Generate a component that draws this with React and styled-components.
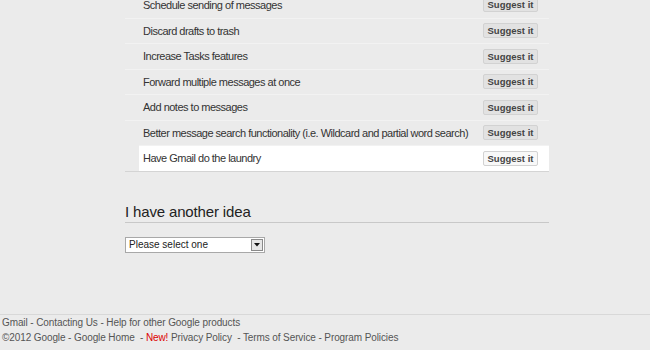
import React from "react";
import styled, { createGlobalStyle } from "styled-components";

const Global = createGlobalStyle`
  html, body { margin: 0; padding: 0; background: #ebebeb; }
  body { font-family: "Liberation Sans", Arial, sans-serif; overflow: hidden; }
`;

const Page = styled.div`
  width: 650px;
  height: 350px;
  display: flex;
  flex-direction: column;
  overflow: hidden;
`;

const Main = styled.div`
  flex: 1;
  padding-left: 125px;
  width: 424px;
`;

const List = styled.div`
  margin-top: -8px;
  border-bottom: 1px solid #d4d4d4;
`;

const Row = styled.div`
  box-sizing: border-box;
  height: 25.5px;
  display: flex;
  align-items: center;
  justify-content: space-between;
  margin-left: ${(p) => (p.$active ? "14px" : "0")};
  padding-left: ${(p) => (p.$active ? "4px" : "18px")};
  padding-right: 11px;
  background: ${(p) => (p.$active ? "#ffffff" : "transparent")};
  border-top: ${(p) => (p.$first ? "none" : "1px solid #f2f2f2")};
`;

const Label = styled.span`
  font-size: 11px;
  letter-spacing: -0.5px;
  color: #333;
  white-space: nowrap;
`;

const Button = styled.button`
  box-sizing: border-box;
  flex-shrink: 0;
  width: 55px;
  height: 15px;
  padding: 0;
  border: 1px solid #d2d2d2;
  border-radius: 2px;
  background: ${(p) => (p.$active ? "#f8f8f8" : "#e2e2e2")};
  font-family: "Liberation Sans", Arial, sans-serif;
  font-size: 9.5px;
  font-weight: bold;
  color: #444;
  line-height: 13px;
  white-space: nowrap;
`;

const Heading = styled.h2`
  margin: 31px 0 0;
  font-size: 15px;
  letter-spacing: -0.15px;
  font-weight: normal;
  color: #222;
  line-height: 18px;
  padding-bottom: 1px;
  border-bottom: 1px solid #c8c8c8;
`;

const Select = styled.div`
  margin-top: 14px;
  box-sizing: border-box;
  width: 140px;
  height: 16px;
  display: flex;
  align-items: center;
  justify-content: space-between;
  border: 1px solid #a8a8a8;
  background: #fff;
  font-size: 10px;
  color: #222;
  padding-left: 3px;
`;

const Arrow = styled.span`
  box-sizing: border-box;
  width: 12px;
  height: 12px;
  margin-right: 1px;
  background: #e6e6e6;
  border: 1px solid #8a8a8a;
  display: flex;
  align-items: center;
  justify-content: center;
`;

const Footer = styled.footer`
  border-top: 1px solid #d8d8d8;
  padding: 0 0 5px 2px;
  font-size: 10px;
  letter-spacing: -0.1px;
  color: #555;
  line-height: 15px;
`;

const FooterLine = styled.div`
  white-space: nowrap;
`;

const New = styled.span`
  color: #dd0000;
`;

const items = [
  "Schedule sending of messages",
  "Discard drafts to trash",
  "Increase Tasks features",
  "Forward multiple messages at once",
  "Add notes to messages",
  "Better message search functionality (i.e. Wildcard and partial word search)",
  "Have Gmail do the laundry",
];

export default function App() {
  return (
    <Page>
      <Global />
      <Main>
        <List>
          {items.map((t, i) => {
            const active = i === items.length - 1;
            return (
              <Row key={t} $first={i === 0} $active={active}>
                <Label>{t}</Label>
                <Button $active={active}>Suggest it</Button>
              </Row>
            );
          })}
        </List>
        <Heading>I have another idea</Heading>
        <Select>
          <span>Please select one</span>
          <Arrow>
            <svg width="6" height="4" viewBox="0 0 6 4">
              <path d="M0 0 L6 0 L3 3.5 Z" fill="#111" />
            </svg>
          </Arrow>
        </Select>
      </Main>
      <Footer>
        <FooterLine>Gmail - Contacting Us - Help for other Google products</FooterLine>
        <FooterLine>
          ©2012 Google - Google Home &nbsp;- <New>New!</New> Privacy Policy &nbsp;- Terms of Service - Program Policies
        </FooterLine>
      </Footer>
    </Page>
  );
}
